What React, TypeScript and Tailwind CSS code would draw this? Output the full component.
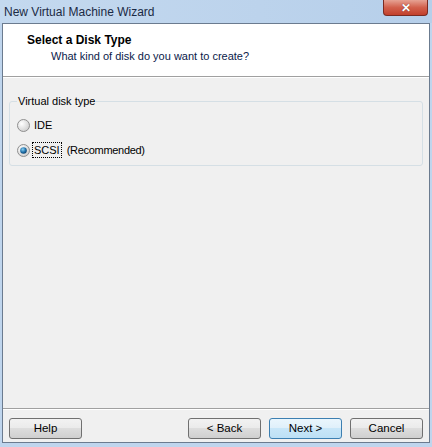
import React from "react";

// Win7-style radio bullet
const Radio: React.FC<{ checked?: boolean }> = ({ checked }) => (
  <svg width="13" height="13" viewBox="0 0 13 13" className="shrink-0">
    <defs>
      <radialGradient id={checked ? "rgOn" : "rgOff"} cx="0.35" cy="0.35" r="0.8">
        <stop offset="0" stopColor="#ffffff" />
        <stop offset="1" stopColor="#c8c8c8" />
      </radialGradient>
      <radialGradient id="dot" cx="0.4" cy="0.35" r="0.7">
        <stop offset="0" stopColor="#8ad2f4" />
        <stop offset="0.6" stopColor="#1f6fa8" />
        <stop offset="1" stopColor="#0d3e67" />
      </radialGradient>
    </defs>
    <circle cx="6.5" cy="6.5" r="6" fill={checked ? "url(#rgOn)" : "url(#rgOff)"} stroke="#8f8f8f" />
    {checked ? <circle cx="6.5" cy="6.5" r="3.3" fill="url(#dot)" /> : null}
  </svg>
);

const Btn: React.FC<{ label: string; primary?: boolean }> = ({ label, primary }) => (
  <button
    className={`w-[73px] h-[21px] rounded-[3px] border text-[11.5px] text-black leading-none flex items-center justify-center ${
      primary
        ? "border-[#3c7fb1] bg-[linear-gradient(#eaf6fd_0%,#e0f0fa_45%,#c8e6f8_50%,#bde0f5_100%)]"
        : "border-[#707070] bg-[linear-gradient(#f2f2f2_0%,#ebebeb_45%,#dddddd_50%,#cfcfcf_100%)]"
    }`}
  >
    {label}
  </button>
);

const App: React.FC = () => {
  return (
    <div className="w-[432px] h-[447px] flex flex-col bg-[#bfd5ed] font-['Liberation_Sans',Arial,sans-serif] overflow-hidden">
      {/* Title bar */}
      <div className="h-[23px] relative flex items-center pl-[4px] bg-[linear-gradient(90deg,#c4d9ef,#bcd3ec_60%,#b6cfea)]">
        <span className="text-[12px] text-[#1b2a44]">New Virtual Machine Wizard</span>
        <div className="absolute right-[4px] top-0 w-[45px] h-[16px] rounded-b-[4px] border border-t-0 border-[#7a2b22] bg-[linear-gradient(#e6a293,#d2604c_50%,#c2402c)] flex items-center justify-center">
          <span className="text-white text-[12px] font-bold leading-none [text-shadow:0_0_1px_#5a1a10]">✕</span>
        </div>
      </div>

      {/* Client area */}
      <div className="flex-1 mx-[2px] mb-[4px] border border-[#6b7b8f] flex flex-col bg-[#f0f0f0]">
        {/* Header */}
        <div className="h-[53px] bg-white border-b border-[#a0a0a0] flex flex-col pt-[9px]">
          <div className="pl-[24px] text-[12px] font-bold text-black leading-[14px]">Select a Disk Type</div>
          <div className="pl-[48px] mt-[2px] text-[11px] text-[#0a1a4a] leading-[14px]">What kind of disk do you want to create?</div>
        </div>
        <div className="h-px bg-white" />

        {/* Body */}
        <div className="flex-1 px-[6px] pt-[16px]">
          <fieldset className="border border-[#d5dfe5] rounded-[3px] h-[72px] px-[7px]">
            <legend className="text-[11px] text-black px-[1px] leading-[14px]">Virtual disk type</legend>
            <div className="flex items-center gap-[4px] mt-[10px] h-[14px]">
              <Radio />
              <span className="text-[11px] text-black">IDE</span>
            </div>
            <div className="flex items-center gap-[3px] mt-[11px] h-[14px]">
              <Radio checked />
              <span className="text-[11px] text-black outline outline-1 outline-dotted outline-black px-[1px] leading-[14px]">SCSI</span>
              <span className="text-[11px] text-black ml-[3px] tracking-[-0.3px]">(Recommended)</span>
            </div>
          </fieldset>
        </div>

        {/* Separator + buttons */}
        <div className="border-t border-[#a0a0a0]" />
        <div className="h-px bg-white" />
        <div className="h-[32px] flex items-start pt-[8px] px-[6px]">
          <Btn label="Help" />
          <div className="flex-1" />
          <div className="flex gap-[8px]">
            <Btn label="< Back" />
            <Btn label="Next >" primary />
            <Btn label="Cancel" />
          </div>
        </div>
      </div>
    </div>
  );
};

export default App;
